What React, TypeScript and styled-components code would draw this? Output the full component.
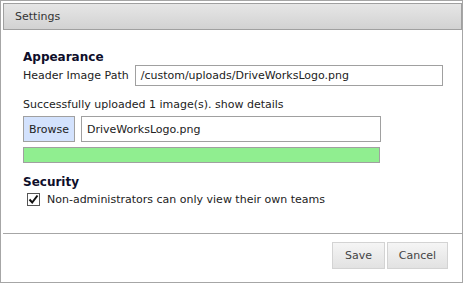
import styled, { createGlobalStyle } from 'styled-components';

const GlobalStyle = createGlobalStyle`
  html, body {
    margin: 0;
    padding: 0;
    background: #ffffff;
  }
  body {
    font-family: 'DejaVu Sans', Verdana, sans-serif;
    font-size: 11px;
    color: #222222;
  }
`;

const Dialog = styled.div`
  box-sizing: border-box;
  width: 463px;
  height: 283px;
  border: 1px solid #a6a6a6;
  padding: 2px 0 0 2px;
  display: flex;
  flex-direction: column;
`;

const TitleBar = styled.div`
  box-sizing: border-box;
  height: 27px;
  border: 1px solid #a0a0a0;
  background: linear-gradient(#e6e6e6, #d2d2d2);
  display: flex;
  align-items: center;
  padding-left: 11px;
  font-size: 11px;
  color: #333333;
`;

const Body = styled.div`
  padding: 20px 0 0 20px;
  display: flex;
  flex-direction: column;
`;

const Heading = styled.div<{ $top?: number }>`
  font-size: 12px;
  font-weight: bold;
  color: #0e0e2a;
  line-height: 15px;
  margin-top: ${(p) => p.$top ?? 0}px;
`;

const Row = styled.div<{ $top?: number }>`
  display: flex;
  align-items: center;
  gap: 6px;
  margin-top: ${(p) => p.$top ?? 0}px;
`;

const Label = styled.span`
  font-size: 11px;
  color: #222222;
`;

const TextBox = styled.div<{ $width: number; $height: number }>`
  box-sizing: border-box;
  width: ${(p) => p.$width}px;
  height: ${(p) => p.$height}px;
  border: 1px solid #a0a0a0;
  background: #ffffff;
  display: flex;
  align-items: center;
  padding-left: 5px;
  font-size: 11px;
  color: #222222;
`;

const Message = styled.div`
  margin-top: 12px;
  font-size: 11px;
  line-height: 14px;
`;

const BrowseButton = styled.div`
  box-sizing: border-box;
  width: 52px;
  height: 26px;
  border: 1px solid #a0a0a0;
  background: #d3e2fd;
  display: flex;
  align-items: center;
  justify-content: center;
  font-size: 11px;
  color: #222222;
`;

const Progress = styled.div`
  box-sizing: border-box;
  width: 357px;
  height: 16px;
  margin-top: 5px;
  border: 1px solid #a0a0a0;
  background: #90ee90;
`;

const CheckRow = styled.label`
  display: flex;
  align-items: center;
  gap: 7px;
  margin: 3px 0 0 4px;
  font-size: 11px;
  color: #222222;
`;

const Box = styled.span`
  box-sizing: border-box;
  width: 13px;
  height: 13px;
  border: 1px solid #555555;
  background: #ffffff;
  display: flex;
  align-items: center;
  justify-content: center;
`;

const Separator = styled.div`
  margin-top: 27px;
  height: 1px;
  background: #a6a6a6;
`;

const Footer = styled.div`
  display: flex;
  justify-content: flex-end;
  gap: 2px;
  padding: 8px 14px 0 0;
`;

const Button = styled.div<{ $width: number }>`
  box-sizing: border-box;
  width: ${(p) => p.$width}px;
  height: 27px;
  border: 1px solid #d3d3d3;
  background: linear-gradient(#f5f5f5, #e2e2e2);
  display: flex;
  align-items: center;
  justify-content: center;
  font-size: 11px;
  color: #444444;
`;

export default function App() {
  return (
    <>
      <GlobalStyle />
      <Dialog>
        <TitleBar>Settings</TitleBar>
        <Body>
          <Heading>Appearance</Heading>
          <Row>
            <Label>Header Image Path</Label>
            <TextBox $width={308} $height={21}>
              /custom/uploads/DriveWorksLogo.png
            </TextBox>
          </Row>
          <Message>Successfully uploaded 1 image(s). show details</Message>
          <Row $top={4}>
            <BrowseButton>Browse</BrowseButton>
            <TextBox $width={300} $height={26}>
              DriveWorksLogo.png
            </TextBox>
          </Row>
          <Progress />
          <Heading $top={12}>Security</Heading>
          <CheckRow>
            <Box>
              <svg width="11" height="11" viewBox="0 0 11 11">
                <path d="M1.5 5.5 L4.2 8.5 L9.5 1.5" fill="none" stroke="#111" strokeWidth="2" />
              </svg>
            </Box>
            Non-administrators can only view their own teams
          </CheckRow>
        </Body>
        <Separator />
        <Footer>
          <Button $width={53}>Save</Button>
          <Button $width={61}>Cancel</Button>
        </Footer>
      </Dialog>
    </>
  );
}
